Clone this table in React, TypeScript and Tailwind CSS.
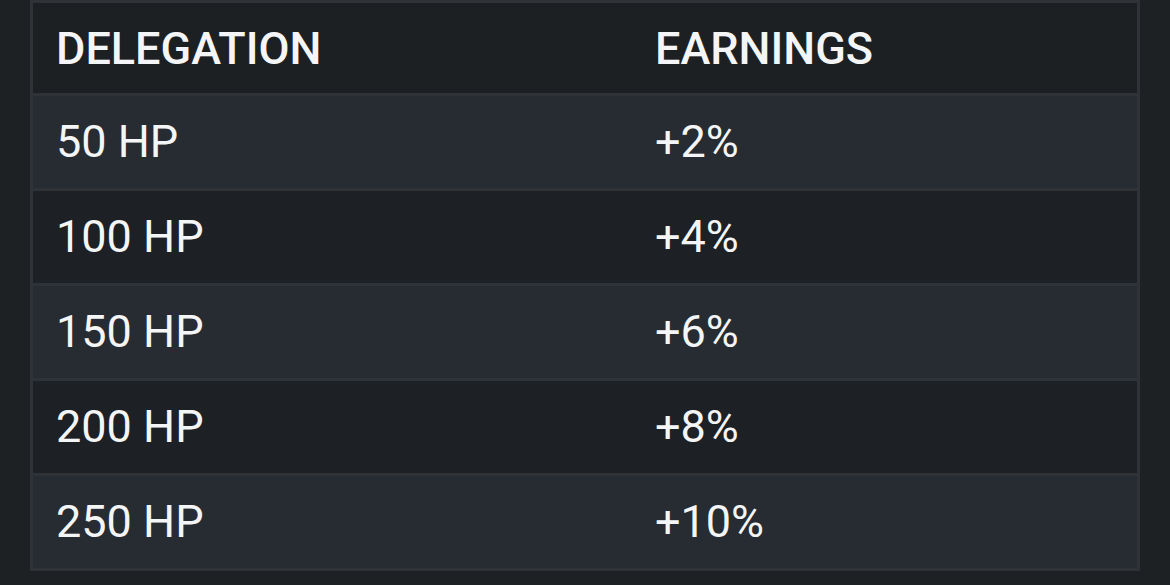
import * as React from 'react';

const rows = [
  { delegation: '50 HP', earnings: '+2%' },
  { delegation: '100 HP', earnings: '+4%' },
  { delegation: '150 HP', earnings: '+6%' },
  { delegation: '200 HP', earnings: '+8%' },
  { delegation: '250 HP', earnings: '+10%' },
];

export default function App() {
  return (
    <div
      className="w-[1170px] h-[585px] bg-[#1e2124] pl-[30px] text-[#f4f5f6]"
      style={{ fontFamily: 'Roboto, "Noto Sans", sans-serif' }}
    >
      <div className="w-[1110px] bg-[#2f3337] p-[3px] flex flex-col gap-[3px]">
        <div className="h-[90px] bg-[#1d2023] flex items-center pl-[23px] text-[45px] font-medium leading-none">
          <span className="w-[599px]">DELEGATION</span>
          <span>EARNINGS</span>
        </div>
        {rows.map((row, i) => (
          <div
            key={row.delegation}
            className={
              'h-[92px] flex items-center pl-[23px] text-[45px] leading-none ' +
              (i % 2 === 0 ? 'bg-[#262c32]' : 'bg-[#1d2024]')
            }
          >
            <span className="w-[599px] pb-[2px]">{row.delegation}</span>
            <span className="pb-[2px]">{row.earnings}</span>
          </div>
        ))}
      </div>
    </div>
  );
}
